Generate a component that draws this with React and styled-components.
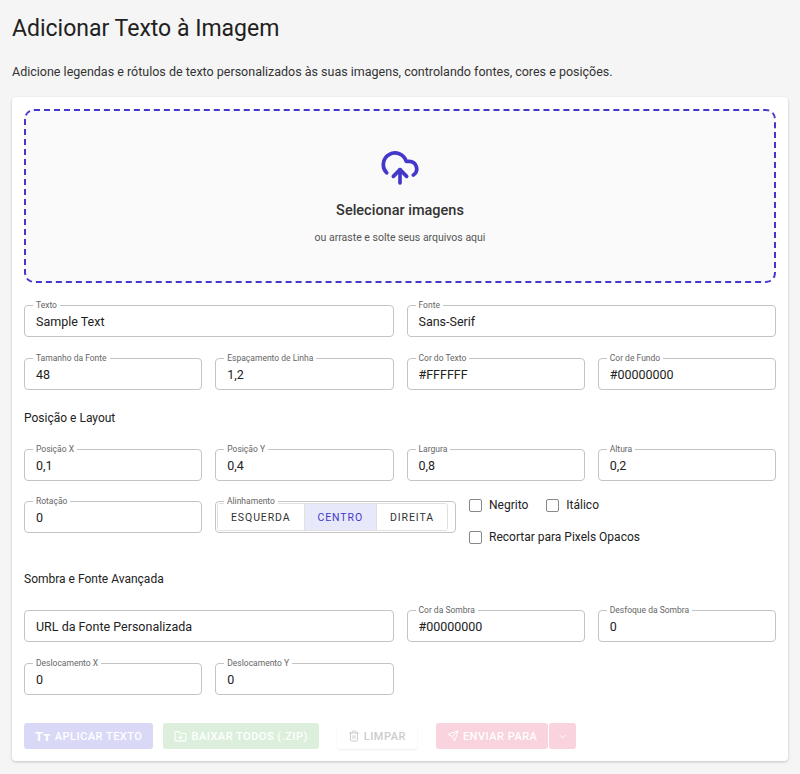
import React from "react";
import styled, { createGlobalStyle } from "styled-components";
import { CloudUpload, FolderDown, Trash2, Send, ChevronDown } from "lucide-react";

const G = createGlobalStyle`
  body{margin:0;background:#f5f5f5;font-family:Roboto,"Noto Sans",sans-serif;color:#212121;}
  *{box-sizing:border-box;}
`;
const Page = styled.div`padding:12px 12px 12px 12px;`;
const Title = styled.h1`font-size:23px;font-weight:400;margin:2px 0 0;line-height:30px;`;
const Sub = styled.p`font-size:12.5px;margin:20px 0 18px;color:#333;`;
const Card = styled.div`background:#fff;border-radius:4px;box-shadow:0 1px 3px rgba(0,0,0,.2);padding:12px 12px 12px;`;
const Drop = styled.div`height:174px;border:2px dashed #4338ca;border-radius:10px;background:#fafafa;
  display:flex;flex-direction:column;align-items:center;justify-content:center;`;
const DropTitle = styled.div`font-size:14.5px;font-weight:500;color:#333;margin-top:14px;`;
const DropSub = styled.div`font-size:10.5px;color:#555;margin-top:12px;`;
const Grid = styled.div`display:grid;grid-template-columns:repeat(4,1fr);column-gap:13px;margin-top:${p=>p.$mt||21}px;`;
const FieldBox = styled.div`position:relative;grid-column:span ${p=>p.$span||1};height:32px;border:1px solid #c4c4c4;border-radius:4px;
  display:flex;align-items:center;padding:0 11px;font-size:12.5px;color:#222;flex:none;`;
const Lab = styled.span`position:absolute;top:-7px;left:8px;background:#fff;padding:0 3px;font-size:8.5px;color:#666;line-height:12px;`;
const Section = styled.div`font-size:12px;color:#222;margin-top:${p=>p.$mt}px;`;
const Field = ({label,value,span}) => <FieldBox $span={span}>{label && <Lab>{label}</Lab>}{value}</FieldBox>;
const Row4 = styled.div`display:flex;margin-top:20px;align-items:flex-start;height:32px;`;
const Toggle = styled.div`position:relative;margin-left:13px;width:241px;height:32px;border:1px solid #c4c4c4;border-radius:4px;display:flex;align-items:center;`;
const TogBtns = styled.div`display:flex;height:28px;border:1px solid #e0e0e0;border-radius:3px;overflow:hidden;margin-left:1px;`;
const TB = styled.div`font-size:10.5px;letter-spacing:.9px;padding:0 13px;display:flex;align-items:center;color:${p=>p.$a?"#4338ca":"#333"};
  background:${p=>p.$a?"#e8e8fb":"#fff"};border-left:${p=>p.$f?"none":"1px solid #e0e0e0"};`;
const Checks = styled.div`margin-left:13px;display:flex;flex-direction:column;gap:18px;margin-top:-3px;`;
const CheckRow = styled.div`display:flex;gap:18px;`;
const Check = styled.label`display:flex;align-items:center;gap:7px;font-size:12px;color:#222;`;
const Box = styled.span`width:13px;height:13px;border:1px solid #888;border-radius:2px;`;
const Btns = styled.div`display:flex;margin-top:28px;gap:10px;`;
const Btn = styled.div`height:26px;border-radius:3px;display:flex;align-items:center;gap:4px;padding:0 ${p=>p.$px||11}px;font-size:11px;letter-spacing:.5px;font-weight:500;
  background:${p=>p.$bg};color:${p=>p.$c};box-shadow:${p=>p.$flat?"0 1px 2px rgba(0,0,0,.08)":"none"};`;
const Split = styled.div`display:flex;gap:1px;margin-left:9px;`;

export default function App(){
  return <Page><G/>
    <Title>Adicionar Texto à Imagem</Title>
    <Sub>Adicione legendas e rótulos de texto personalizados às suas imagens, controlando fontes, cores e posições.</Sub>
    <Card>
      <Drop>
        <CloudUpload size={40} color="#4338ca" strokeWidth={2.2}/>
        <DropTitle>Selecionar imagens</DropTitle>
        <DropSub>ou arraste e solte seus arquivos aqui</DropSub>
      </Drop>
      <Grid $mt={22}><Field span={2} label="Texto" value="Sample Text"/><Field span={2} label="Fonte" value="Sans-Serif"/></Grid>
      <Grid><Field label="Tamanho da Fonte" value="48"/><Field label="Espaçamento de Linha" value="1,2"/><Field label="Cor do Texto" value="#FFFFFF"/><Field label="Cor de Fundo" value="#00000000"/></Grid>
      <Section $mt={21}>Posição e Layout</Section>
      <Grid $mt={24}><Field label="Posição X" value="0,1"/><Field label="Posição Y" value="0,4"/><Field label="Largura" value="0,8"/><Field label="Altura" value="0,2"/></Grid>
      <Row4>
        <FieldBox style={{width:178}}><Lab>Rotação</Lab>0</FieldBox>
        <Toggle><Lab>Alinhamento</Lab><TogBtns><TB $f>ESQUERDA</TB><TB $a>CENTRO</TB><TB>DIREITA</TB></TogBtns></Toggle>
        <Checks>
          <CheckRow><Check><Box/>Negrito</Check><Check><Box/>Itálico</Check></CheckRow>
          <Check><Box/>Recortar para Pixels Opacos</Check>
        </Checks>
      </Row4>
      <Section $mt={39}>Sombra e Fonte Avançada</Section>
      <Grid $mt={24}><Field span={2} value="URL da Fonte Personalizada"/><Field label="Cor da Sombra" value="#00000000"/><Field label="Desfoque da Sombra" value="0"/></Grid>
      <Grid><Field label="Deslocamento X" value="0"/><Field label="Deslocamento Y" value="0"/></Grid>
      <Btns>
        <Btn $bg="#d9d9f7" $c="#fff"><b style={{fontSize:13}}>Tт</b>APLICAR TEXTO</Btn>
        <Btn $bg="#dcefdc" $c="#fff"><FolderDown size={13}/>BAIXAR TODOS (.ZIP)</Btn>
        <Btn $bg="#fff" $c="#ccc" $flat style={{marginLeft:8}}><Trash2 size={12}/>LIMPAR</Btn>
        <Split><Btn $bg="#f9d3de" $c="#fff"><Send size={12}/>ENVIAR PARA</Btn><Btn $bg="#f9d3de" $c="#fff" $px={8}><ChevronDown size={11}/></Btn></Split>
      </Btns>
    </Card>
  </Page>;
}
